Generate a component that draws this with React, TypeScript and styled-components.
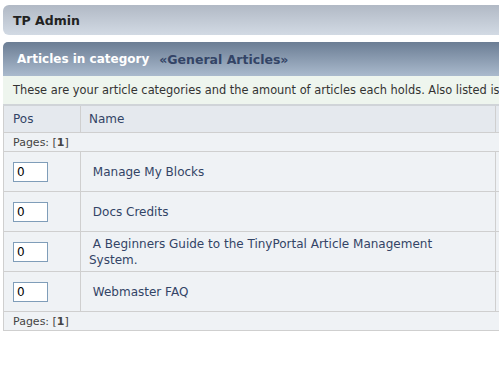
import { createGlobalStyle } from "styled-components";
import styled from "styled-components";

const GlobalStyle = createGlobalStyle`
  html, body {
    margin: 0;
    padding: 0;
    background: #ffffff;
    overflow: hidden;
  }
  body {
    font-family: "DejaVu Sans", Verdana, sans-serif;
    color: #000;
  }
`;

const Page = styled.div`
  width: 600px;
  padding: 5px 0 0 3px;
`;

const TitleBar = styled.div`
  height: 30px;
  display: flex;
  align-items: center;
  padding-left: 10px;
  border-radius: 6px;
  background: linear-gradient(to bottom, #b1b9c5, #d2dae4);
  font-size: 12.5px;
  font-weight: bold;
  color: #222;
`;

const CatHeader = styled.div`
  margin-top: 7px;
  height: 34px;
  display: flex;
  align-items: center;
  padding-left: 14px;
  border-radius: 5px 5px 0 0;
  background: linear-gradient(to bottom, #6b7d94, #aabacd);
  font-size: 12px;
  font-weight: bold;
  color: #fff;
`;

const CatName = styled.span`
  margin-left: 10px;
  font-size: 12.5px;
  color: #334466;
`;

const Description = styled.div`
  height: 28px;
  display: flex;
  align-items: center;
  padding-left: 10px;
  background: #eef5ee;
  font-size: 11.4px;
  color: #333;
  white-space: nowrap;
`;

const Table = styled.table`
  border-collapse: collapse;
  width: 100%;
  border-top: 2px solid #d0d4d8;
  font-size: 12px;
`;

const HeadCell = styled.th<{ $w?: number; $pad?: number }>`
  width: ${(p) => (p.$w ? `${p.$w}px` : "auto")};
  height: 26px;
  padding: 0 ${(p) => p.$pad ?? 9}px 0 ${(p) => p.$pad ?? 9}px;
  text-align: left;
  font-weight: normal;
  background: #e5e9ee;
  color: #334466;
  border: 1px solid #cfcfcf;
`;

const PagesCell = styled.td`
  height: 18px;
  padding: 0 9px;
  font-size: 11px;
  color: #444;
  background: #eff2f5;
  border: 1px solid #cfcfcf;
`;

const Cell = styled.td<{ $pad?: number }>`
  height: 39px;
  padding: 0 ${(p) => p.$pad ?? 9}px;
  background: #eff2f5;
  color: #334466;
  border: 1px solid #cfcfcf;
  vertical-align: middle;
`;

const PosInput = styled.input`
  box-sizing: border-box;
  width: 35px;
  height: 20px;
  padding: 0 3px;
  border: 1px solid #7f9db9;
  background: #fff;
  font-family: "DejaVu Sans", Verdana, sans-serif;
  font-size: 12px;
  color: #000;
  display: block;
`;

const NameText = styled.span`
  display: block;
  max-width: 370px;
  line-height: 16px;
`;

const articles = [
  "Manage My Blocks",
  "Docs Credits",
  "A Beginners Guide to the TinyPortal Article Management System.",
  "Webmaster FAQ",
];

function Pages() {
  return (
    <tr>
      <PagesCell colSpan={3}>
        Pages: [<b>1</b>]
      </PagesCell>
    </tr>
  );
}

export default function App() {
  return (
    <Page>
      <GlobalStyle />
      <TitleBar>TP Admin</TitleBar>
      <CatHeader>
        Articles in category<CatName>«General Articles»</CatName>
      </CatHeader>
      <Description>
        These are your article categories and the amount of articles each holds. Also listed is
      </Description>
      <Table>
        <thead>
          <tr>
            <HeadCell $w={58}>Pos</HeadCell>
            <HeadCell $w={398} $pad={8}>Name</HeadCell>
            <HeadCell />
          </tr>
        </thead>
        <tbody>
          <Pages />
          {articles.map((name) => (
            <tr key={name}>
              <Cell>
                <PosInput defaultValue="0" />
              </Cell>
              <Cell $pad={8}>
                <NameText>&nbsp;{name}</NameText>
              </Cell>
              <Cell />
            </tr>
          ))}
          <Pages />
        </tbody>
      </Table>
    </Page>
  );
}
